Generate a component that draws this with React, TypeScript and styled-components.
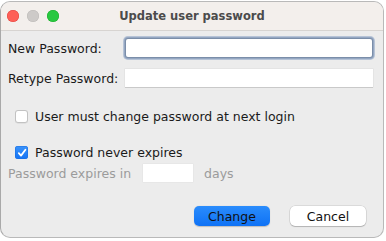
import { FunctionComponent } from 'react';
import styled, { createGlobalStyle } from 'styled-components';

const GlobalStyle = createGlobalStyle`
  html, body {
    margin: 0;
    padding: 0;
    background: #ffffff;
  }
  body {
    font-family: "DejaVu Sans", "Liberation Sans", sans-serif;
  }
`;

const Window = styled.div`
  width: 384px;
  height: 237px;
  margin-top: 1px;
  border: 1px solid #b9b9b9;
  border-left-color: #a9a9a9;
  border-radius: 10px;
  background: #ececec;
  overflow: hidden;
  display: flex;
  flex-direction: column;
  box-sizing: border-box;
`;

const TitleBar = styled.div`
  height: 29px;
  flex: none;
  background: #f3efec;
  border-bottom: 1px solid #d7d4d1;
  box-sizing: border-box;
  display: flex;
  align-items: center;
  position: relative;
  padding-left: 6px;
  gap: 8px;
`;

const Light = styled.span<{ $color: string; $edge: string }>`
  width: 12px;
  height: 12px;
  border-radius: 50%;
  background: ${(p) => p.$color};
  box-shadow: inset 0 0 0 0.5px ${(p) => p.$edge};
`;

const Title = styled.div`
  position: absolute;
  left: 0;
  right: 0;
  top: 0;
  bottom: 0;
  display: flex;
  align-items: center;
  justify-content: center;
  font-size: 11.5px;
  font-weight: bold;
  color: #4b4b4b;
  pointer-events: none;
`;

const Body = styled.div`
  flex: 1;
  display: flex;
  flex-direction: column;
  padding: 8px 10px 0 7px;
  font-size: 12.5px;
  color: #1a1a1a;
`;

const FieldGrid = styled.div`
  display: grid;
  grid-template-columns: 117px 1fr;
  row-gap: 12px;
  align-items: center;
`;

const Label = styled.label`
  white-space: nowrap;
`;

const TextInput = styled.div<{ $focused?: boolean }>`
  height: 18px;
  background: #ffffff;
  box-sizing: border-box;
  margin: ${(p) => (p.$focused ? '0 1px' : '0')};
  box-shadow: ${(p) =>
    p.$focused
      ? '0 0 0 1px #7b8ea9, 0 0 0 2px #95a7c2, 0 0 0 3px #b6c3d6'
      : '0 1px 0 #c9c9c9, 0 0 0 0.5px #dcdcdc'};
  border-radius: ${(p) => (p.$focused ? '2px' : '0')};
`;

const CheckRow = styled.div<{ $top: number }>`
  display: flex;
  align-items: center;
  gap: 7px;
  padding-left: 7px;
  margin-top: ${(p) => p.$top}px;
  white-space: nowrap;
`;

const Box = styled.span<{ $checked?: boolean }>`
  width: 13px;
  height: 13px;
  border-radius: 3px;
  box-sizing: border-box;
  display: flex;
  align-items: center;
  justify-content: center;
  background: ${(p) => (p.$checked ? 'linear-gradient(#3b94fb, #1473f4)' : '#ffffff')};
  box-shadow: ${(p) =>
    p.$checked ? 'inset 0 0 0 0.5px #1a6ee0' : 'inset 0 0 0 1px #c2c2c2, 0 0.5px 0.5px rgba(0,0,0,0.1)'};
`;

const ExpiryRow = styled.div`
  display: flex;
  align-items: center;
  margin-top: 4px;
  color: #9b9b9b;
  white-space: nowrap;
`;

const SmallInput = styled.div`
  width: 50px;
  height: 18px;
  background: #ffffff;
  margin: 0 11px 0 12px;
  box-shadow: 0 0 0 0.5px #e2e2e2;
`;

const ButtonRow = styled.div`
  display: flex;
  justify-content: flex-end;
  gap: 20px;
  margin-top: 24px;
  padding-right: 7px;
`;

const Button = styled.button<{ $primary?: boolean }>`
  width: 76px;
  height: 20px;
  border: none;
  border-radius: 5px;
  font-family: inherit;
  font-size: 12.5px;
  color: #111111;
  padding: 0;
  background: ${(p) => (p.$primary ? 'linear-gradient(#2a8cfc, #0f72f5)' : '#ffffff')};
  box-shadow: ${(p) =>
    p.$primary
      ? '0 0.5px 1px rgba(0,0,0,0.2)'
      : '0 0 0 0.5px rgba(0,0,0,0.15), 0 1px 1px rgba(0,0,0,0.18)'};
`;

const Check: FunctionComponent = () => (
  <svg width="10" height="10" viewBox="0 0 10 10">
    <path d="M1.8 5.2 L4 7.6 L8.4 1.8" fill="none" stroke="#ffffff" strokeWidth="1.8" strokeLinecap="round" strokeLinejoin="round" />
  </svg>
);

const App: FunctionComponent = () => (
  <>
    <GlobalStyle />
    <Window>
      <TitleBar>
        <Light $color="#fe5f57" $edge="#e0443e" />
        <Light $color="#cdcac8" $edge="#bcb9b7" />
        <Light $color="#28c840" $edge="#1aab29" />
        <Title>Update user password</Title>
      </TitleBar>
      <Body>
        <FieldGrid>
          <Label>New Password:</Label>
          <TextInput $focused />
          <Label>Retype Password:</Label>
          <TextInput />
        </FieldGrid>
        <CheckRow $top={22}>
          <Box />
          <span>User must change password at next login</span>
        </CheckRow>
        <CheckRow $top={21}>
          <Box $checked>
            <Check />
          </Box>
          <span>Password never expires</span>
        </CheckRow>
        <ExpiryRow>
          <span>Password expires in</span>
          <SmallInput />
          <span>days</span>
        </ExpiryRow>
        <ButtonRow>
          <Button $primary>Change</Button>
          <Button>Cancel</Button>
        </ButtonRow>
      </Body>
    </Window>
  </>
);

export default App;
